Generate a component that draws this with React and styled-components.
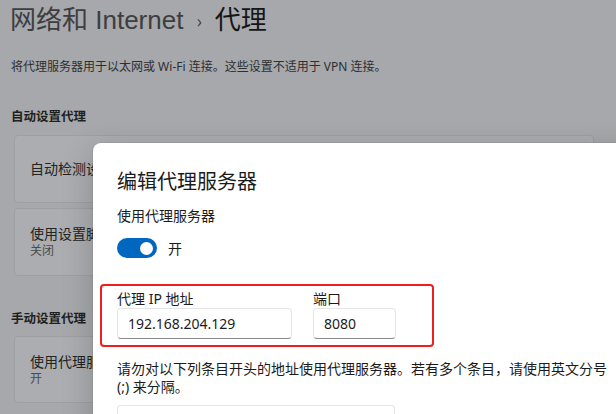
import React from "react";
import styled, { createGlobalStyle } from "styled-components";

const Global = createGlobalStyle`
  html, body { margin: 0; padding: 0; }
  body {
    width: 616px;
    height: 414px;
    overflow: hidden;
    background: #a6a8ab;
    font-family: "Segoe UI", "Noto Sans", "Noto Sans CJK SC", sans-serif;
  }
`;

const Page = styled.div`
  position: relative;
  width: 616px;
  height: 414px;
  overflow: hidden;
  padding: 3px 0 0 10px;
  box-sizing: border-box;
`;

const Title = styled.h1`
  margin: 0;
  display: flex;
  align-items: center;
  gap: 11px;
  font-family: "Liberation Sans", "Noto Sans CJK SC", sans-serif;
  font-size: 26px;
  line-height: 34px;
  font-weight: 400;
  color: #3d3e40;
  white-space: nowrap;
`;

const Chevron = styled.span`
  font-family: "Noto Sans CJK SC", sans-serif;
  font-size: 18px;
  color: #3d3e40;
  margin: 0 2px;
`;

const Current = styled.span`
  color: #151516;
  font-weight: 400;
`;

const Desc = styled.p`
  margin: 21px 0 0 1px;
  font-size: 12px;
  line-height: 18px;
  color: #2e2f31;
  white-space: nowrap;
`;

const SectionHead = styled.h2`
  margin: ${(p) => p.$top}px 0 0 1px;
  font-size: 12.5px;
  line-height: 18px;
  font-weight: 700;
  color: #1e1f20;
`;

const CardList = styled.div`
  margin: ${(p) => p.$top}px 0 0 4px;
  display: flex;
  flex-direction: column;
  gap: 5px;
  width: 580px;
`;

const Card = styled.div`
  height: ${(p) => p.$h}px;
  box-sizing: border-box;
  background: #abadb0;
  border: 1px solid #9d9fa2;
  border-radius: 4px;
  padding-left: 15px;
  display: flex;
  flex-direction: column;
  justify-content: center;
`;

const CardTitle = styled.div`
  font-size: 14px;
  line-height: 18px;
  color: #222324;
`;

const CardSub = styled.div`
  font-size: 12px;
  line-height: 16px;
  color: #4a4b4d;
`;

const Dialog = styled.div`
  position: absolute;
  left: 93px;
  top: 143px;
  width: 560px;
  height: 320px;
  background: #ffffff;
  border-radius: 8px;
  box-shadow: 0 8px 32px rgba(0, 0, 0, 0.2), 0 0 0 1px rgba(0, 0, 0, 0.05);
  padding: 25px 24px 0;
  box-sizing: border-box;
`;

const DialogTitle = styled.h3`
  margin: 0;
  font-size: 20px;
  line-height: 28px;
  font-weight: 400;
  color: #1b1b1b;
`;

const Label = styled.div`
  margin-top: ${(p) => p.$top || 0}px;
  font-size: 14px;
  line-height: 20px;
  color: #1b1b1b;
`;

const ToggleRow = styled.div`
  margin-top: 12px;
  display: flex;
  align-items: center;
  gap: 11px;
  font-size: 14px;
  color: #1b1b1b;
`;

const Toggle = styled.div`
  width: 40px;
  height: 20px;
  border-radius: 10px;
  background: #0067c0;
  position: relative;
  &::after {
    content: "";
    position: absolute;
    right: 4px;
    top: 3.5px;
    width: 13px;
    height: 13px;
    border-radius: 50%;
    background: #fff;
  }
`;

const Highlight = styled.div`
  margin: 26px 0 0 -17px;
  width: 334px;
  box-sizing: border-box;
  border: 2px solid #f21d1d;
  border-radius: 4px;
  padding: 4px 36px 6px 15px;
  display: flex;
  gap: 21px;
`;

const Field = styled.div`
  display: flex;
  flex-direction: column;
  width: ${(p) => p.$w}px;
`;

const FieldLabel = styled.div`
  font-size: 14px;
  line-height: 18px;
  color: #1b1b1b;
`;

const Input = styled.div`
  width: ${(p) => p.$w}px;
  height: 31px;
  box-sizing: border-box;
  border: 1px solid #e5e5e5;
  border-bottom-color: #8a8a8a;
  border-radius: 4px;
  background: #fff;
  padding-left: 10px;
  display: flex;
  align-items: center;
  font-size: 14px;
  color: #1b1b1b;
  margin-top: ${(p) => p.$top || 0}px;
`;

const Help = styled.p`
  margin: 13px 0 0;
  width: 492px;
  font-size: 14px;
  line-height: 18px;
  color: #1b1b1b;
`;

export default function App() {
  return (
    <>
      <Global />
      <Page>
        <Title>
          <span>网络和 Internet</span>
          <Chevron>›</Chevron>
          <Current>代理</Current>
        </Title>
        <Desc>将代理服务器用于以太网或 Wi-Fi 连接。这些设置不适用于 VPN 连接。</Desc>
        <SectionHead $top={32}>自动设置代理</SectionHead>
        <CardList $top={9}>
          <Card $h={68}>
            <CardTitle>自动检测设置</CardTitle>
          </Card>
          <Card $h={68}>
            <CardTitle>使用设置脚本</CardTitle>
            <CardSub>关闭</CardSub>
          </Card>
        </CardList>
        <SectionHead $top={34}>手动设置代理</SectionHead>
        <CardList $top={8}>
          <Card $h={67}>
            <CardTitle>使用代理服务器</CardTitle>
            <CardSub>开</CardSub>
          </Card>
        </CardList>

        <Dialog>
          <DialogTitle>编辑代理服务器</DialogTitle>
          <Label $top={10}>使用代理服务器</Label>
          <ToggleRow>
            <Toggle />
            <span>开</span>
          </ToggleRow>
          <Highlight>
            <Field $w={175}>
              <FieldLabel>代理 IP 地址</FieldLabel>
              <Input $w={175}>192.168.204.129</Input>
            </Field>
            <Field $w={83}>
              <FieldLabel>端口</FieldLabel>
              <Input $w={83}>8080</Input>
            </Field>
          </Highlight>
          <Help>
            请勿对以下列条目开头的地址使用代理服务器。若有多个条目，请使用英文分号 (;) 来分隔。
          </Help>
          <Input $w={278} $top={9} />
        </Dialog>
      </Page>
    </>
  );
}
